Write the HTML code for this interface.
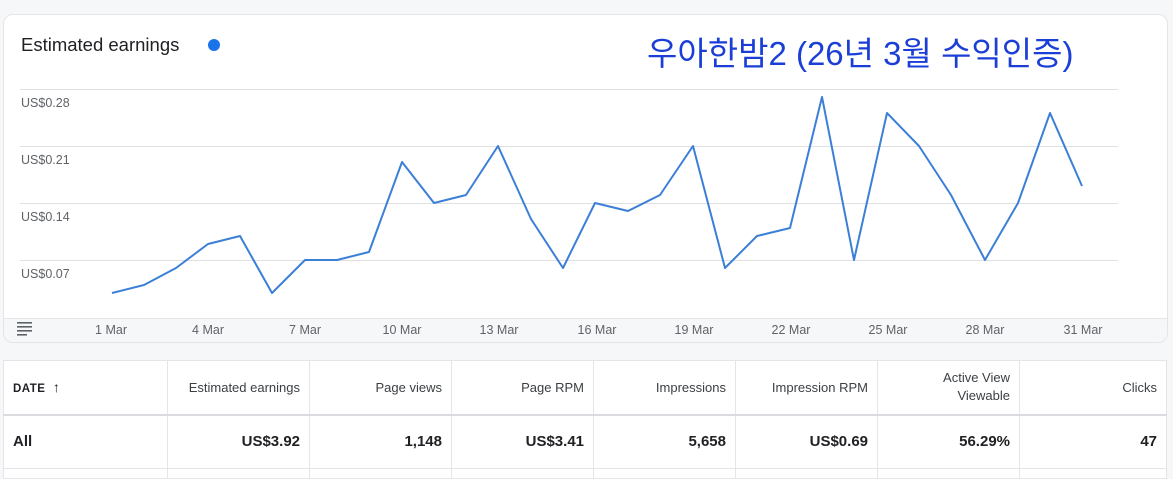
<!DOCTYPE html>
<html><head><meta charset="utf-8"><style>
*{margin:0;padding:0;box-sizing:border-box}
body{width:1173px;height:476px;background:#f6f7f9;font-family:"Liberation Sans",Arial,sans-serif;position:relative;overflow:hidden;color:#202124}
.card{position:absolute;left:3px;top:14px;width:1165px;height:329px;background:#fff;border:1px solid #e3e5e8;border-radius:10px;overflow:hidden}
.foot{position:absolute;left:0;right:0;top:303px;height:26px;background:#f6f7f9;border-top:1px solid #e3e5e8}
.title{position:absolute;left:21px;top:34px;font-size:18.5px;color:#202124}
.dot{position:absolute;left:208px;top:39px;width:12px;height:12px;border-radius:50%;background:#1a73e8}
.kr{position:absolute;left:647px;top:33px;font-size:33px;color:#1b3fd6;font-family:"Liberation Sans","Noto Sans CJK KR",sans-serif;line-height:42px;white-space:nowrap}
.yl{position:absolute;left:21px;font-size:12.5px;color:#5f6368}
.xl{position:absolute;top:323px;font-size:12.5px;color:#5f6368;transform:translateX(-50%)}
table{position:absolute;left:3px;top:360px;width:1163px;border-collapse:collapse;background:#fff;table-layout:fixed}
td{border:1px solid #e3e5e8;text-align:right;padding:0 9px;font-size:13px;color:#3c4043}
tr.h td{height:54px;border-bottom:2px solid #dadce0}
tr.r td{height:54px;font-size:15px;font-weight:bold;color:#202124}
tr.e td{height:10px}
</style></head><body>
<div class="card">
<div class="foot"></div>
</div>
<div class="title">Estimated earnings</div>
<div class="dot"></div>
<div class="kr">우아한밤2 (26년 3월 수익인증)</div>
<svg style="position:absolute;left:0;top:0" width="1173" height="476">
<g stroke="#e0e0e0" stroke-width="1">
<line x1="20" y1="89.5" x2="1118" y2="89.5"/>
<line x1="20" y1="146.5" x2="1118" y2="146.5"/>
<line x1="20" y1="203.5" x2="1118" y2="203.5"/>
<line x1="20" y1="260.5" x2="1118" y2="260.5"/>
</g>
<polyline fill="none" stroke="#3b7fd6" stroke-width="2" stroke-linejoin="round" points="112,293 144,285 176,268 208,244 240,236 272,293 305,260 337,260 369,252 402,162 434,203 466,195 498,146 531,219 563,268 595,203 628,211 660,195 693,146 725,268 757,236 790,228 822,97 854,260 887,113 919,146 951,195 985,260 1018,203 1050,113 1082,186"/>
<g fill="#5f6368"><rect x="17" y="322" width="15" height="1.6"/><rect x="17" y="326" width="15" height="1.6"/><rect x="17" y="330" width="15" height="1.6"/><rect x="17" y="334" width="10" height="1.6"/></g>
</svg>
<div class="yl" style="top:96px">US$0.28</div>
<div class="yl" style="top:153px">US$0.21</div>
<div class="yl" style="top:210px">US$0.14</div>
<div class="yl" style="top:267px">US$0.07</div>
<div class="xl" style="left:111px">1 Mar</div>
<div class="xl" style="left:208px">4 Mar</div>
<div class="xl" style="left:305px">7 Mar</div>
<div class="xl" style="left:402px">10 Mar</div>
<div class="xl" style="left:499px">13 Mar</div>
<div class="xl" style="left:597px">16 Mar</div>
<div class="xl" style="left:694px">19 Mar</div>
<div class="xl" style="left:791px">22 Mar</div>
<div class="xl" style="left:888px">25 Mar</div>
<div class="xl" style="left:985px">28 Mar</div>
<div class="xl" style="left:1083px">31 Mar</div>
<table>
<colgroup><col style="width:164px"><col style="width:142px"><col style="width:142px"><col style="width:142px"><col style="width:142px"><col style="width:142px"><col style="width:142px"><col style="width:147px"></colgroup>
<tr class="h"><td style="text-align:left;font-size:11.5px;font-weight:bold;letter-spacing:.5px;color:#202124">DATE &nbsp;<span style="font-weight:normal;font-size:14px">↑</span></td><td>Estimated earnings</td><td>Page views</td><td>Page RPM</td><td>Impressions</td><td>Impression RPM</td><td style="line-height:18px">Active View<br>Viewable</td><td>Clicks</td></tr>
<tr class="r"><td style="text-align:left">All</td><td>US$3.92</td><td>1,148</td><td>US$3.41</td><td>5,658</td><td>US$0.69</td><td>56.29%</td><td>47</td></tr>
<tr class="e"><td></td><td></td><td></td><td></td><td></td><td></td><td></td><td></td></tr>
</table>
</body></html>
